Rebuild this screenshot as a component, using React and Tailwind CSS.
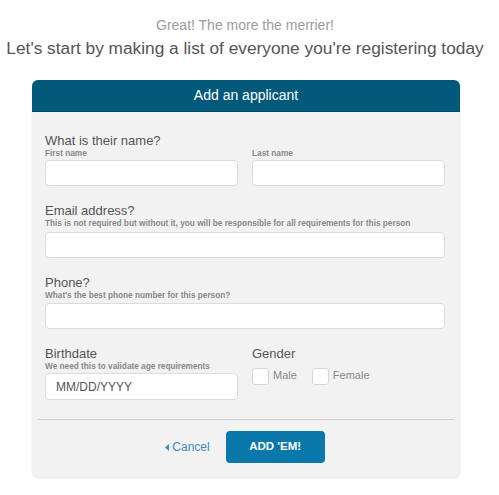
import { useState } from 'react'

function Field({ label, hint, children }) {
  return (
    <div>
      <p className="text-[13px] leading-[15px] text-[#555]">{label}</p>
      {hint && <p className="text-[8.25px] leading-[11px] font-bold text-[#888]">{hint}</p>}
      {children}
    </div>
  )
}

function TextInput({ placeholder, className = '' }) {
  return (
    <input
      type="text"
      placeholder={placeholder}
      className={`block w-full h-[26px] px-[10px] bg-white border border-[#dcdcdc] rounded-[4px] text-[12px] text-[#555] placeholder:text-[#555] focus:outline-none ${className}`}
    />
  )
}

export default function App() {
  const [male, setMale] = useState(false)
  const [female, setFemale] = useState(false)

  return (
    <div className="w-[490px] bg-white pb-[17px]" style={{ fontFamily: '"Liberation Sans", Arial, sans-serif' }}>
      <p className="pt-[17px] text-center text-[14px] leading-[16px] text-[#9c9c9c]">Great! The more the merrier!</p>
      <h1 className="mt-[4px] text-center text-[17.3px] leading-[22px] text-[#555]">
        Let's start by making a list of everyone you're registering today
      </h1>

      <div className="ml-[32px] mt-[21px] w-[428px] rounded-[6px] bg-[#f2f2f2] shadow-[0_1px_2px_rgba(0,0,0,0.12)]">
        <div className="h-[32px] rounded-t-[6px] bg-[#03597a] border-b border-[#024a66] flex items-center justify-center text-[14px] text-white">
          Add an applicant
        </div>

        <div className="pl-[13px] pr-[15px] pt-[21px]">
          <Field label="What is their name?">
            <div className="grid grid-cols-2 gap-[14px]">
              <div>
                <p className="text-[8.25px] leading-[11px] font-bold text-[#888]">First name</p>
                <TextInput className="mt-[1px]" />
              </div>
              <div>
                <p className="text-[8.25px] leading-[11px] font-bold text-[#888]">Last name</p>
                <TextInput className="mt-[1px]" />
              </div>
            </div>
          </Field>

          <div className="mt-[17px]">
            <Field label="Email address?" hint="This is not required but without it, you will be responsible for all requirements for this person">
              <TextInput className="mt-[3px]" />
            </Field>
          </div>

          <div className="mt-[17px]">
            <Field label="Phone?" hint="What's the best phone number for this person?">
              <TextInput className="mt-[2px]" />
            </Field>
          </div>

          <div className="mt-[17px] grid grid-cols-2 gap-[14px]">
            <Field label="Birthdate" hint="We need this to validate age requirements">
              <TextInput placeholder="MM/DD/YYYY" className="mt-[1px] h-[27px]" />
            </Field>
            <div>
              <p className="text-[13px] leading-[15px] text-[#555]">Gender</p>
              <div className="mt-[7px] flex items-start gap-[15px]">
                <label className="flex items-start gap-[4px] cursor-pointer">
                  <span
                    onClick={() => setMale(!male)}
                    className={`block w-[17px] h-[17px] rounded-[3px] border border-[#d6d6d6] ${male ? 'bg-[#0a78ab]' : 'bg-white'}`}
                  />
                  <span className="text-[11px] leading-[14px] text-[#888]">Male</span>
                </label>
                <label className="flex items-start gap-[4px] cursor-pointer">
                  <span
                    onClick={() => setFemale(!female)}
                    className={`block w-[17px] h-[17px] rounded-[3px] border border-[#d6d6d6] ${female ? 'bg-[#0a78ab]' : 'bg-white'}`}
                  />
                  <span className="text-[11px] leading-[14px] text-[#888]">Female</span>
                </label>
              </div>
            </div>
          </div>
        </div>

        <div className="mx-[6px] mt-[19px] border-t border-[#cfcfcf]" />

        <div className="flex items-center justify-center gap-[16px] pt-[11px] pb-[14px] pr-[2px]">
          <button className="flex items-center gap-[3px] text-[12px] text-[#3a8dbd]">
            <svg width="4" height="7" viewBox="0 0 4 7"><path d="M4 0 L0 3.5 L4 7 Z" fill="currentColor" /></svg>
            Cancel
          </button>
          <button className="w-[99px] h-[32px] rounded-[4px] bg-[#0a78ab] text-[11.5px] font-bold text-white">
            ADD 'EM!
          </button>
        </div>
      </div>
    </div>
  )
}
